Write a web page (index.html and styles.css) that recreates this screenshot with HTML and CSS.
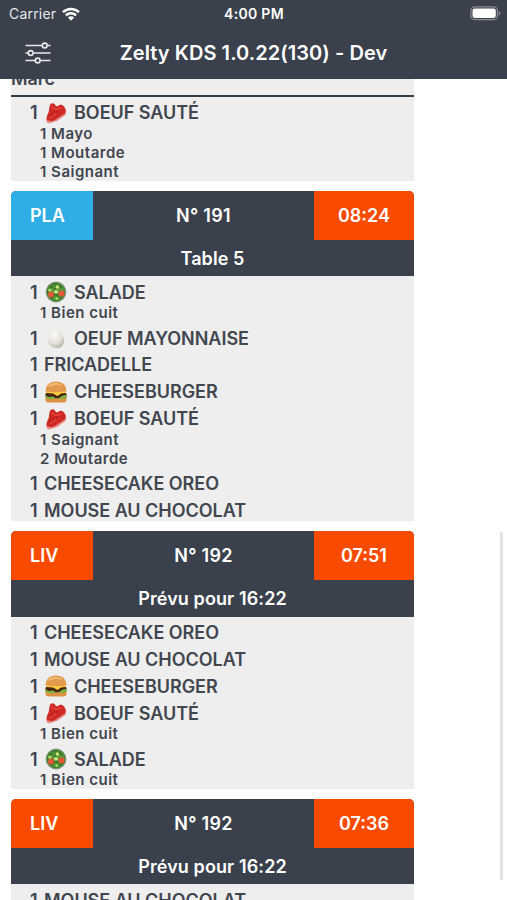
FILE: index.html
```html
<!DOCTYPE html>
<html lang="fr">
<head>
  <meta charset="UTF-8">
  <meta name="viewport" content="width=device-width, initial-scale=1.0">
  <title>Zelty KDS</title>
  <link rel="stylesheet" href="styles.css">
</head>
<body>
  <!-- food icons -->
  <svg class="sprites" width="0" height="0">
    <symbol id="meat" viewBox="0 0 22 22">
      <path d="M1.500 15.500C.5 19 2 21.800 5 21.300L12 19 20.500 13 21.500 9 14 10Z" fill="#e88d86"/>
      <path d="M5.500 2C7.500 .3 9.800 1.300 10.500 3.500L12.300 4.500C14.500 2.500 17 2.300 18.500 4 20.800 6 21.500 9 20 11 17.500 13.500 14.500 14.500 12 16.500 8.500 19.500 4 20 2.300 18 .8 15.500 2.500 12.500 3.500 10.500 4.500 7.500 3.800 4.500 5.500 2Z" fill="#cf2925"/>
      <path d="M6.500 4C8 6 9 7.500 12 7.500L17 5.500M5 16C7 14 9 13.800 11 11.500" fill="none" stroke="#e54742" stroke-width="1.300"/>
      <path d="M3.800 13C5.500 14 8 12 9.500 9.500M12.500 8L11 11" fill="none" stroke="#a81317" stroke-width=".8"/>
    </symbol>
    <symbol id="salad" viewBox="0 0 22 22">
      <circle cx="11" cy="11" r="10.400" fill="#8b9a82"/>
      <circle cx="11" cy="10.800" r="9.400" fill="#3f8032"/>
      <path d="M3 8L7 3 10 5 14 2.500 18 6 20 11 16 13 14 18 9 19 5 16Z" fill="#5b9b39"/>
      <path d="M4 8L8 5M13 4L17 7M7 17L11 12 14 17M9 7L12 10" fill="none" stroke="#2c6424" stroke-width="1.300"/>
      <circle cx="6" cy="13.500" r="3" fill="#e25736"/>
      <circle cx="16.500" cy="12.500" r="3.100" fill="#e25736"/>
      <circle cx="12.500" cy="6" r="1.700" fill="#c9e77c"/>
      <circle cx="4.800" cy="9" r="1.500" fill="#b8df70"/>
      <circle cx="11" cy="10.800" r="1.900" fill="#d1e989"/>
      <circle cx="12" cy="17.500" r="1.500" fill="#a3d35c"/>
    </symbol>
    <symbol id="egg" viewBox="0 0 22 22">
      <defs>
        <radialGradient id="shell" cx=".4" cy=".3" r=".75">
          <stop offset="0" stop-color="#fbfaf7"/>
          <stop offset=".6" stop-color="#e7e4dd"/>
          <stop offset="1" stop-color="#bbb5ab"/>
        </radialGradient>
      </defs>
      <path d="M9.500 1C14.500.5 19 8 19 13.500 19 18.500 15.800 21 12 21 7 21 3 18 3 12.500 3 7 5.500 1.500 9.500 1Z" fill="url(#shell)"/>
    </symbol>
    <symbol id="burger" viewBox="0 0 22 22">
      <rect x=".5" y="14.500" width="21" height="7" rx="3.200" fill="#dc9145"/>
      <rect x=".5" y="11.500" width="21" height="5.800" rx="2" fill="#472416"/>
      <path d="M.5 14Q3 16.800 5.500 15.800T10 16.800 15 16.300 21.500 14V16.500Q18 18.500 14 17.800T7 18 .5 16.500Z" fill="#7ab83a"/>
      <path d="M.8 10.500H21.200L20.500 12 16 12.600 12.500 15 8 12.600 1.500 12Z" fill="#ffd03e"/>
      <path d="M.6 10.500C.6 4 4.500 .5 11 .5S21.400 4 21.400 10.500C17 11.600 5 11.600 .6 10.500Z" fill="#e39a4c"/>
      <path d="M4 5.500C6 2.700 13 2 16.500 4.300" fill="none" stroke="#f3bd78" stroke-width="1.800"/>
    </symbol>
  </svg>

  <header class="topbar">
    <div class="status">
      <div class="carrier">
        Carrier
        <svg class="wifi" width="18" height="14" viewBox="0 0 18 14">
          <path d="M1 5.200A11.300 11.300 0 0 1 17 5.200M3.900 8.300A7.200 7.200 0 0 1 14.100 8.300" fill="none" stroke="#fff" stroke-width="2.500"/>
          <path d="M5.900 10.500A4.400 4.400 0 0 1 12.100 10.500L9 13.700Z" fill="#fff"/>
        </svg>
      </div>
      <div class="clock">4:00 PM</div>
      <svg class="battery" width="31" height="15" viewBox="0 0 31 15">
        <rect x=".9" y=".9" width="26.500" height="12.800" rx="3.800" fill="none" stroke="#878c94" stroke-width="1.200"/>
        <rect x="2.500" y="2.500" width="23.300" height="9.600" rx="2.300" fill="#fff"/>
        <path d="M28.700 5V9.600Q30.300 9 30.300 7.300T28.700 5Z" fill="#878c94"/>
      </svg>
    </div>
    <div class="navbar">
      <svg class="settings" width="26" height="22" viewBox="0 0 26 22" fill="none" stroke="#e6e9ed" stroke-width="1.600">
        <path d="M.5 3.500H17.200M22.200 3.500H25.500M.5 11H3.200M8.200 11H25.500M.5 18.500H10.200M15.200 18.500H25.500"/>
        <circle cx="19.700" cy="3.500" r="2.400"/>
        <circle cx="5.700" cy="11" r="2.400"/>
        <circle cx="12.700" cy="18.500" r="2.400"/>
      </svg>
      <h1>Zelty KDS 1.0.22(130) - Dev</h1>
    </div>
  </header>

  <main class="orders">
    <section class="order">
      <div class="customer"><span>Marc</span></div>
      <div class="items">
        <div class="item"><span class="qty">1</span><svg class="icon"><use href="#meat"/></svg>BOEUF SAUTÉ</div>
        <div class="option"><span>1</span> Mayo</div>
        <div class="option"><span>1</span> Moutarde</div>
        <div class="option"><span>1</span> Saignant</div>
      </div>
    </section>

    <section class="order">
      <div class="head">
        <div class="type pla">PLA</div>
        <div class="number">N° 191</div>
        <div class="timer">08:24</div>
      </div>
      <div class="info">Table 5</div>
      <div class="items">
        <div class="item"><span class="qty">1</span><svg class="icon"><use href="#salad"/></svg>SALADE</div>
        <div class="option"><span>1</span> Bien cuit</div>
        <div class="item"><span class="qty">1</span><svg class="icon"><use href="#egg"/></svg>OEUF MAYONNAISE</div>
        <div class="item"><span class="qty">1</span>FRICADELLE</div>
        <div class="item"><span class="qty">1</span><svg class="icon"><use href="#burger"/></svg>CHEESEBURGER</div>
        <div class="item"><span class="qty">1</span><svg class="icon"><use href="#meat"/></svg>BOEUF SAUTÉ</div>
        <div class="option"><span>1</span> Saignant</div>
        <div class="option"><span>2</span> Moutarde</div>
        <div class="item"><span class="qty">1</span>CHEESECAKE OREO</div>
        <div class="item"><span class="qty">1</span>MOUSE AU CHOCOLAT</div>
      </div>
    </section>

    <section class="order">
      <div class="head">
        <div class="type liv">LIV</div>
        <div class="number">N° 192</div>
        <div class="timer">07:51</div>
      </div>
      <div class="info">Prévu pour 16:22</div>
      <div class="items">
        <div class="item"><span class="qty">1</span>CHEESECAKE OREO</div>
        <div class="item"><span class="qty">1</span>MOUSE AU CHOCOLAT</div>
        <div class="item"><span class="qty">1</span><svg class="icon"><use href="#burger"/></svg>CHEESEBURGER</div>
        <div class="item"><span class="qty">1</span><svg class="icon"><use href="#meat"/></svg>BOEUF SAUTÉ</div>
        <div class="option"><span>1</span> Bien cuit</div>
        <div class="item"><span class="qty">1</span><svg class="icon"><use href="#salad"/></svg>SALADE</div>
        <div class="option"><span>1</span> Bien cuit</div>
      </div>
    </section>

    <section class="order">
      <div class="head">
        <div class="type liv">LIV</div>
        <div class="number">N° 192</div>
        <div class="timer">07:36</div>
      </div>
      <div class="info">Prévu pour 16:22</div>
      <div class="items">
        <div class="item"><span class="qty">1</span>MOUSE AU CHOCOLAT</div>
      </div>
    </section>
  </main>

  <div class="scrollbar"></div>
</body>
</html>
```
FILE: styles.css
```css
* {
  margin: 0;
  padding: 0;
  box-sizing: border-box;
}

body {
  background: #fff;
  color: #41464f;
  font-family: Inter, 'Liberation Sans', sans-serif;
  font-weight: 600;
  height: 100vh;
  display: flex;
  flex-direction: column;
  overflow: hidden;
}

.sprites {
  position: absolute;
}

.topbar {
  background: #3b414c;
  color: #fff;
  height: 79px;
  flex: none;
}

.status {
  display: grid;
  grid-template-columns: 1fr auto 1fr;
  align-items: center;
  height: 27px;
  padding: 0 6px 0 9px;
  font-size: 14px;
}

.carrier {
  display: flex;
  align-items: center;
  gap: 6px;
  font-weight: 400;
  color: #e4e7eb;
  letter-spacing: 0.2px;
}

.clock {
  font-size: 14px;
  letter-spacing: 0.3px;
  margin-right: 2px;
}

.battery {
  justify-self: end;
}

.navbar {
  display: grid;
  grid-template-columns: 26px 1fr 26px;
  align-items: center;
  height: 51px;
  padding: 0 25px;
}

h1 {
  font-size: 20px;
  font-weight: 600;
  letter-spacing: 0.07px;
  text-align: center;
}

.orders {
  flex: 1;
  min-height: 0;
  width: 403px;
  margin-left: 11px;
  overflow: hidden;
}

.order {
  margin-bottom: 9.7px;
  border-radius: 5px 5px 0 0;
  overflow: hidden;
}

.order:first-child {
  border-radius: 0;
}

/* scrolled under the top bar */
.customer {
  display: flex;
  align-items: flex-end;
  height: 17.7px;
  padding-bottom: 5px;
  background: #eee;
  border-bottom: 2px solid #343b42;
  font-size: 18px;
  line-height: 22px;
  letter-spacing: -0.1px;
  overflow: hidden;
}

.head {
  display: grid;
  grid-template-columns: 82px 1fr 100px;
  height: 49px;
  line-height: 49px;
  background: #3b414c;
  color: #fff;
  font-size: 18px;
  text-align: center;
}

.number {
  letter-spacing: 0.3px;
}

.type {
  padding-left: 19px;
  text-align: left;
}

.pla {
  background: #2eaee4;
}

.liv,
.timer {
  background: #f94b00;
}

.info {
  height: 36.5px;
  line-height: 37px;
  background: #3b414c;
  color: #fff;
  font-size: 18px;
  letter-spacing: 0.1px;
  text-align: center;
}

.items {
  background: #eee;
  padding-left: 19px;
}

.item {
  display: flex;
  align-items: center;
  height: 26.85px;
  padding-top: 5.2px;
  font-size: 18px;
  letter-spacing: -0.03px;
  white-space: nowrap;
}

.qty {
  width: 14px;
}

.icon {
  width: 22px;
  height: 22px;
  margin: 0 7px 0 1px;
}

.option {
  height: 19.15px;
  line-height: 19.4px;
  padding-left: 10px;
  font-size: 15px;
  letter-spacing: 0.5px;
}

.scrollbar {
  position: fixed;
  top: 532px;
  right: 4px;
  width: 3px;
  height: 348px;
  background: #e3e3e3;
}
```
